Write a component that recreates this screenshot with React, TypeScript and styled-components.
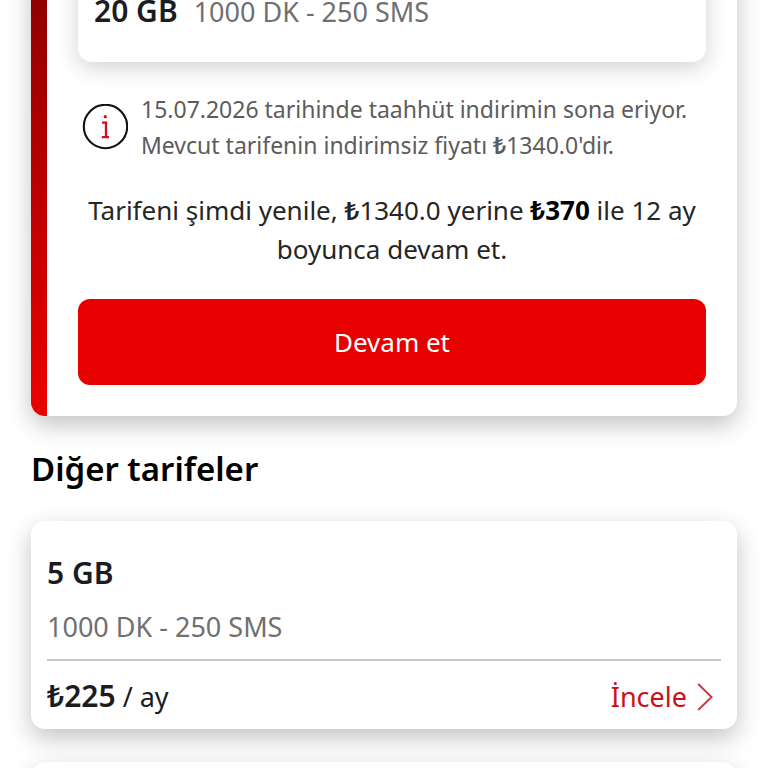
import React from 'react';
import styled, { createGlobalStyle } from 'styled-components';

const GlobalStyle = createGlobalStyle`
  *, *::before, *::after { box-sizing: border-box; }
  html, body { margin: 0; background: #fff; }
  body {
    font-family: "Noto Sans", sans-serif;
    color: #1c1c1e;
    overflow: hidden;
  }
  h2, h3, p { margin: 0; }
`;

const Page = styled.main`
  height: 100vh;
  overflow: hidden;
  padding: 0 31px;
`;

const Card = styled.article`
  background: #fff;
  border-radius: 14px;
  box-shadow: 0 9px 24px rgba(0, 0, 0, 0.24);
`;

const CurrentPlan = styled(Card)`
  display: flex;
  overflow: clip;
  margin-top: -65px;
`;

const Accent = styled.div`
  flex: 0 0 16px;
  background: linear-gradient(#820000, #e60000 94%);
`;

const CurrentBody = styled.div`
  flex: 1;
  padding: 32px 31px 31px;
`;

const Summary = styled(Card)`
  display: flex;
  align-items: baseline;
  gap: 16px;
  padding: 24px 16px 30px;
  box-shadow: 0 6px 22px rgba(0, 0, 0, 0.18);
`;

const Allowance = styled.h3`
  font-size: 30px;
  line-height: 40px;
  font-weight: 600;
`;

const Extras = styled.p`
  font-size: 27px;
  line-height: 40px;
  color: #707070;
`;

const Notice = styled.div`
  display: flex;
  align-items: center;
  gap: 13px;
  margin: 29px 0 28px;
  padding-left: 4px;
`;

const NoticeText = styled.p`
  font-size: 23px;
  line-height: 36px;
  color: #5c5c5c;
`;

const Lira = styled.span`
  font-weight: 600;
`;

const Offer = styled.p`
  font-size: 26px;
  line-height: 39px;
  text-align: center;
  color: #262626;

  strong {
    font-weight: 700;
    color: #000;
  }
`;

const PrimaryButton = styled.button`
  display: block;
  width: 100%;
  height: 86px;
  margin-top: 30px;
  border: 0;
  border-radius: 12px;
  background: #e60000;
  color: #fff;
  font: 400 26px/40px "Noto Sans", sans-serif;
`;

const SectionTitle = styled.h2`
  margin: 31px 0 30px;
  font-size: 33px;
  line-height: 44px;
  font-weight: 600;
  color: #000;
`;

const PlanCard = styled(Card)`
  padding: 32px 16px 12px;
  margin-bottom: 33px;
`;

const PlanHead = styled.header`
  display: grid;
  gap: 14px;
  padding-bottom: 12px;
  border-bottom: 2px solid #c8c8ca;
`;

const PlanFoot = styled.footer`
  display: flex;
  justify-content: space-between;
  align-items: center;
  padding: 15px 8px 0 0;
`;

const Price = styled.p`
  font-size: 27px;
  line-height: 40px;

  strong {
    font-size: 30px;
    font-weight: 600;
  }
`;

const DetailsLink = styled.a`
  display: flex;
  align-items: center;
  gap: 10px;
  font-size: 27px;
  line-height: 40px;
  color: #cc1019;
  text-decoration: none;
`;

const InfoIcon = () => (
  <svg width="46" height="46" viewBox="0 0 46 46" fill="none" aria-hidden="true">
    <circle cx="23.5" cy="22.5" r="21.7" stroke="#111" strokeWidth="2.1" />
    <rect x="21.8" y="11.2" width="3" height="3" rx="0.7" fill="#d0101c" />
    <path d="M20 18.6H24V33.2M19.8 33.2H27" stroke="#d0101c" strokeWidth="2.3" />
  </svg>
);

const ChevronIcon = () => (
  <svg width="16" height="28" viewBox="0 0 16 28" fill="none" aria-hidden="true">
    <path d="M1.2 1L14.6 14L1.2 27" stroke="#c9323a" strokeWidth="1.8" />
  </svg>
);

export default function App() {
  return (
    <>
      <GlobalStyle />
      <Page lang="tr">
        <CurrentPlan>
          <Accent />
          <CurrentBody>
            <Summary>
              <Allowance>20 GB</Allowance>
              <Extras>1000 DK - 250 SMS</Extras>
            </Summary>
            <Notice>
              <InfoIcon />
              <NoticeText>
                15.07.2026 tarihinde taahhüt indirimin sona eriyor.
                <br />
                Mevcut tarifenin indirimsiz fiyatı <Lira>₺</Lira>1340.0'dir.
              </NoticeText>
            </Notice>
            <Offer>
              Tarifeni şimdi yenile, <Lira>₺</Lira>1340.0 yerine <strong>₺370</strong> ile 12 ay
              boyunca devam et.
            </Offer>
            <PrimaryButton type="button">Devam et</PrimaryButton>
          </CurrentBody>
        </CurrentPlan>

        <SectionTitle>Diğer tarifeler</SectionTitle>

        <PlanCard>
          <PlanHead>
            <Allowance>5 GB</Allowance>
            <Extras>1000 DK - 250 SMS</Extras>
          </PlanHead>
          <PlanFoot>
            <Price>
              <strong>₺225</strong> / ay
            </Price>
            <DetailsLink href="#tarife">
              İncele
              <ChevronIcon />
            </DetailsLink>
          </PlanFoot>
        </PlanCard>
        <PlanCard />
      </Page>
    </>
  );
}
